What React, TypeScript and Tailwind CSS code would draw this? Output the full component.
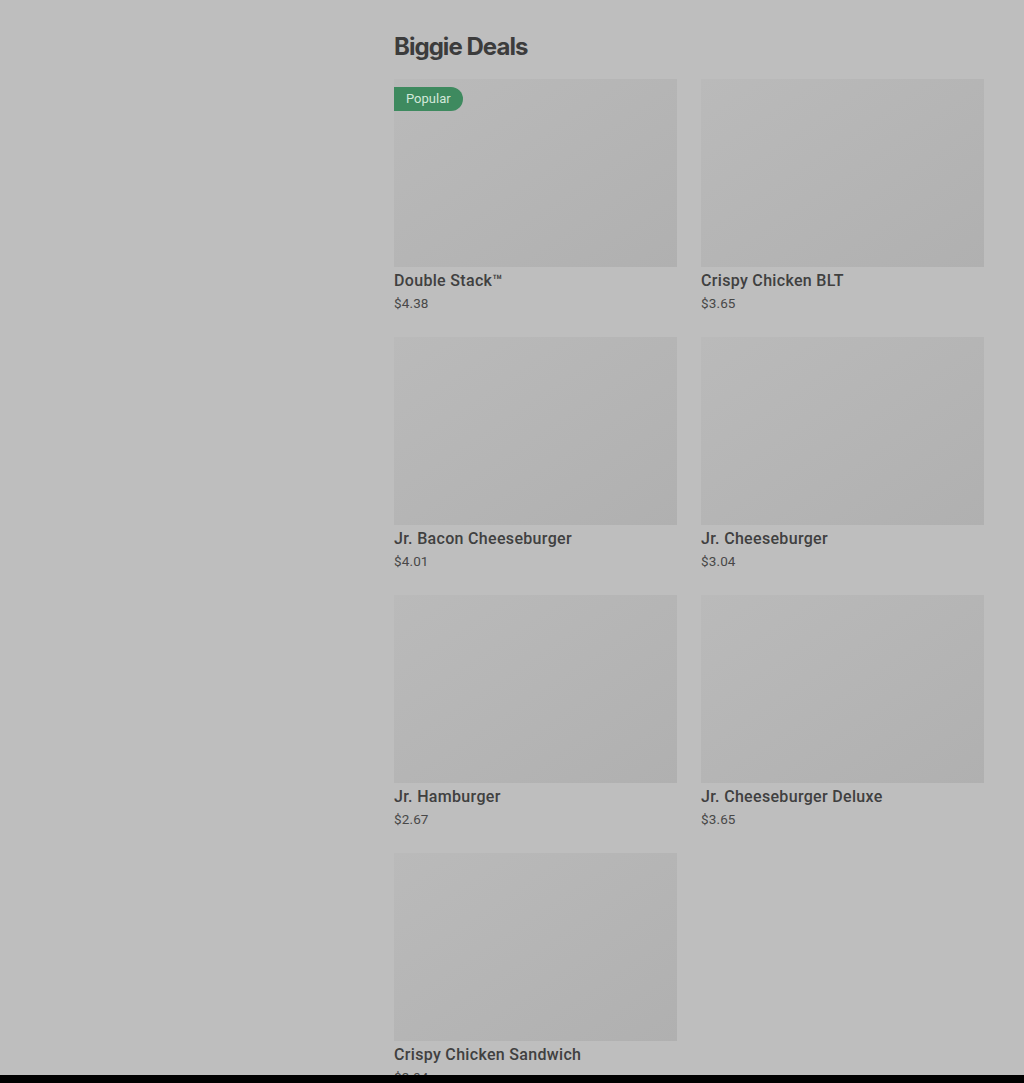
const deals = [
  { name: 'Double Stack™', price: '$4.38', popular: true },
  { name: 'Crispy Chicken BLT', price: '$3.65' },
  { name: 'Jr. Bacon Cheeseburger', price: '$4.01' },
  { name: 'Jr. Cheeseburger', price: '$3.04' },
  { name: 'Jr. Hamburger', price: '$2.67' },
  { name: 'Jr. Cheeseburger Deluxe', price: '$3.65' },
  { name: 'Crispy Chicken Sandwich', price: '$3.94' },
];

function DealCard({ deal }: { deal: { name: string; price: string; popular?: boolean } }) {
  return (
    <div className="flex flex-col">
      <div className="relative h-[188px] bg-gradient-to-br from-[#bababa] to-[#b0b0b0]">
        {deal.popular && (
          <span className="absolute left-0 top-2 flex h-6 items-center rounded-r-full bg-[#3e8a5f] pl-3 pr-3 text-[13px] text-[#d3e8da]">
            Popular
          </span>
        )}
      </div>
      <div className="mt-[3px] text-[16px] font-medium leading-[22px] tracking-[0.02em] text-[#404040]">
        {deal.name}
      </div>
      <div className="mt-[1px] text-[13.5px] leading-[20px] tracking-[0.01em] text-[#484848]">{deal.price}</div>
    </div>
  );
}

export default function App() {
  return (
    <div className="h-[1083px] bg-black" style={{ fontFamily: 'Roboto, "Liberation Sans", sans-serif' }}>
      <div className="h-[1075px] overflow-hidden bg-[#bebebe]">
        <div className="pl-[394px] pr-[40px] pt-[32px]">
          <h2
            className="text-[24px] font-bold leading-[30px] tracking-[-0.04em] text-[#3c3c3c]"
            style={{ fontFamily: 'Inter, "Liberation Sans", sans-serif' }}
          >
            Biggie Deals
          </h2>
          <div className="mt-[17px] grid grid-cols-2 gap-x-6 gap-y-[24px]">
            {deals.map((deal) => (
              <DealCard key={deal.name} deal={deal} />
            ))}
          </div>
        </div>
      </div>
    </div>
  );
}
